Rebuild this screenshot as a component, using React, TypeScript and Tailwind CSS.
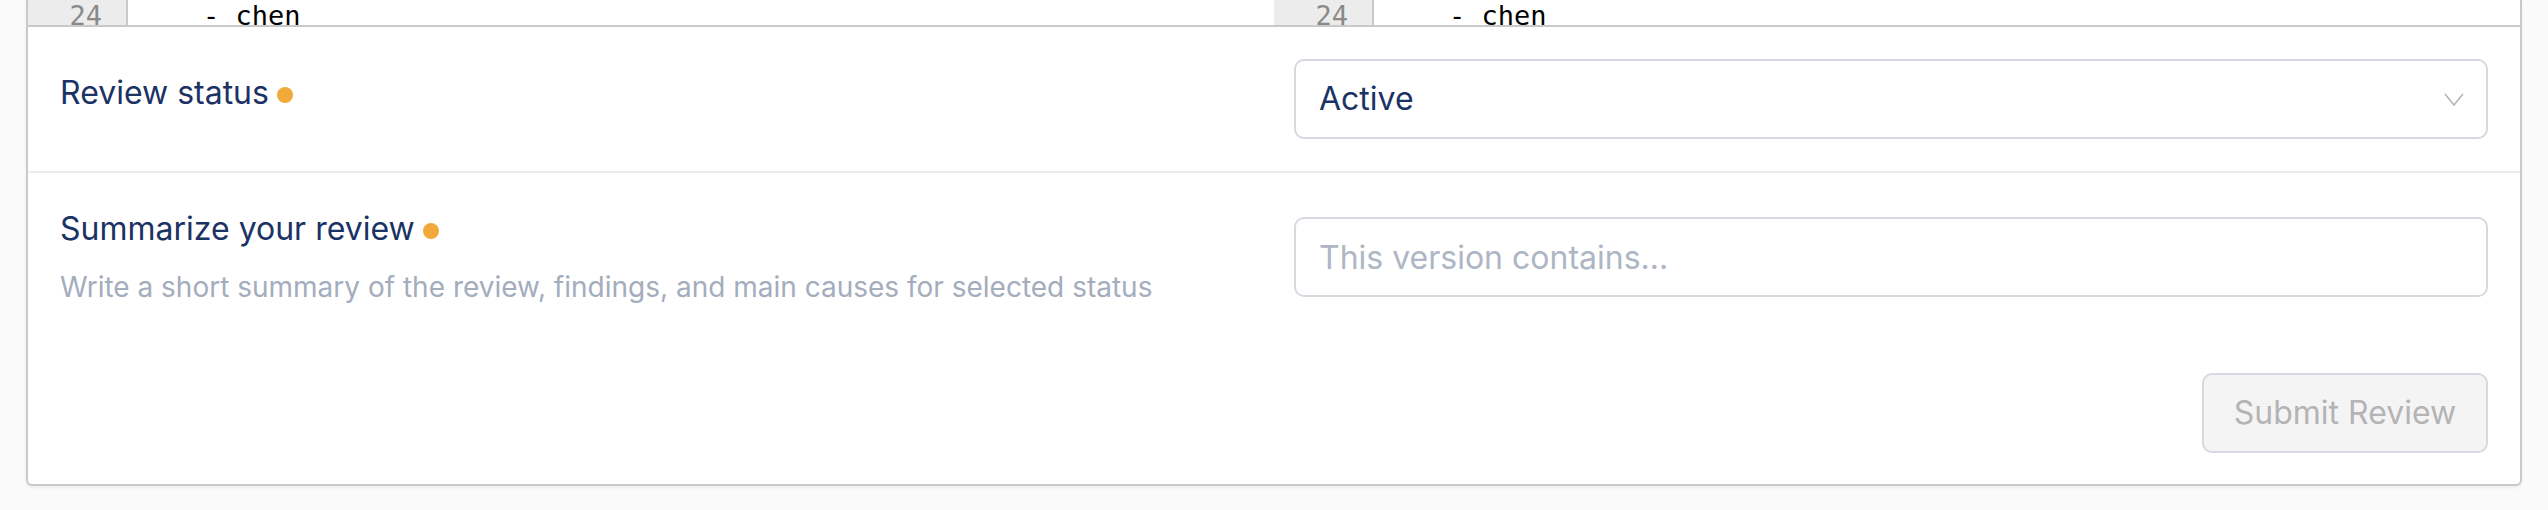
import { FC } from "react";

const DiffLine: FC<{ num: number; code: string }> = ({ num, code }) => {
  return (
    <div className="flex h-[40px] -mt-[4px] leading-[40px] text-[27px] font-['DejaVu_Sans_Mono',monospace]">
      <div className="w-[100px] shrink-0 bg-[#ececec] border-r-2 border-[#c9c9c9] pr-[24px] text-right text-[#8a8a8a]">
        {num}
      </div>
      <div className="pl-[10px] whitespace-pre text-black">{code}</div>
    </div>
  );
};

const Dot: FC = () => (
  <span className="ml-[8px] inline-block size-[16px] rounded-full bg-[#f2a93b] align-middle"></span>
);

const App: FC = () => {
  return (
    <div className="min-h-screen bg-[#fafafa] px-[26px] font-['Inter',sans-serif]">
      <div className="rounded-b-[6px] border-x-2 border-b-2 border-[#c9c9c9] bg-white shadow-[0_2px_3px_rgba(0,0,0,0.05)]">
        <div className="grid h-[25px] grid-cols-2 overflow-hidden">
          <DiffLine num={24} code="    - chen" />
          <DiffLine num={24} code="    - chen" />
        </div>

        <div className="border-t-2 border-[#c9c9c9]">
          <div className="grid grid-cols-2 gap-x-[40px] border-b-2 border-[#ececec] px-[32px] py-[32px]">
            <div className="pt-[14px] text-[32px] leading-[40px] text-[#1b3264]">
              Review status
              <Dot />
            </div>
            <div className="flex h-[80px] items-center justify-between rounded-[10px] border-2 border-[#d5d9e0] pl-[23px] pr-[22px]">
              <span className="text-[32px] text-[#1b3264]">Active</span>
              <svg width="20" height="13" viewBox="0 0 20 13" fill="none">
                <polyline
                  points="1,1 10,12 19,1"
                  stroke="#b5b5b5"
                  strokeWidth="1.6"
                  fill="none"
                />
              </svg>
            </div>
          </div>

          <div className="grid grid-cols-2 gap-x-[40px] px-[32px] pt-[36px] pb-[32px]">
            <div>
              <div className="text-[32px] leading-[40px] text-[#1b3264]">
                Summarize your review
                <Dot />
              </div>
              <div className="mt-[18px] text-[28px] leading-[40px] text-[#a3adbd]">
                Write a short summary of the review, findings, and main causes for selected status
              </div>
            </div>
            <div className="pt-[8px]">
              <input
                type="text"
                placeholder="This version contains..."
                className="h-[80px] w-full rounded-[10px] border-2 border-[#d5d9e0] px-[23px] text-[32px] text-[#1b3264] outline-none placeholder:text-[#aeb6c4]"
              />
            </div>
          </div>

          <div className="flex justify-end px-[32px] pt-[34px] pb-[31px]">
            <button className="h-[80px] w-[286px] rounded-[10px] border-2 border-[#d5d9e0] bg-[#f4f4f5] text-[32px] text-[#b4b4b4]">
              Submit Review
            </button>
          </div>
        </div>
      </div>
    </div>
  );
};

export default App;
